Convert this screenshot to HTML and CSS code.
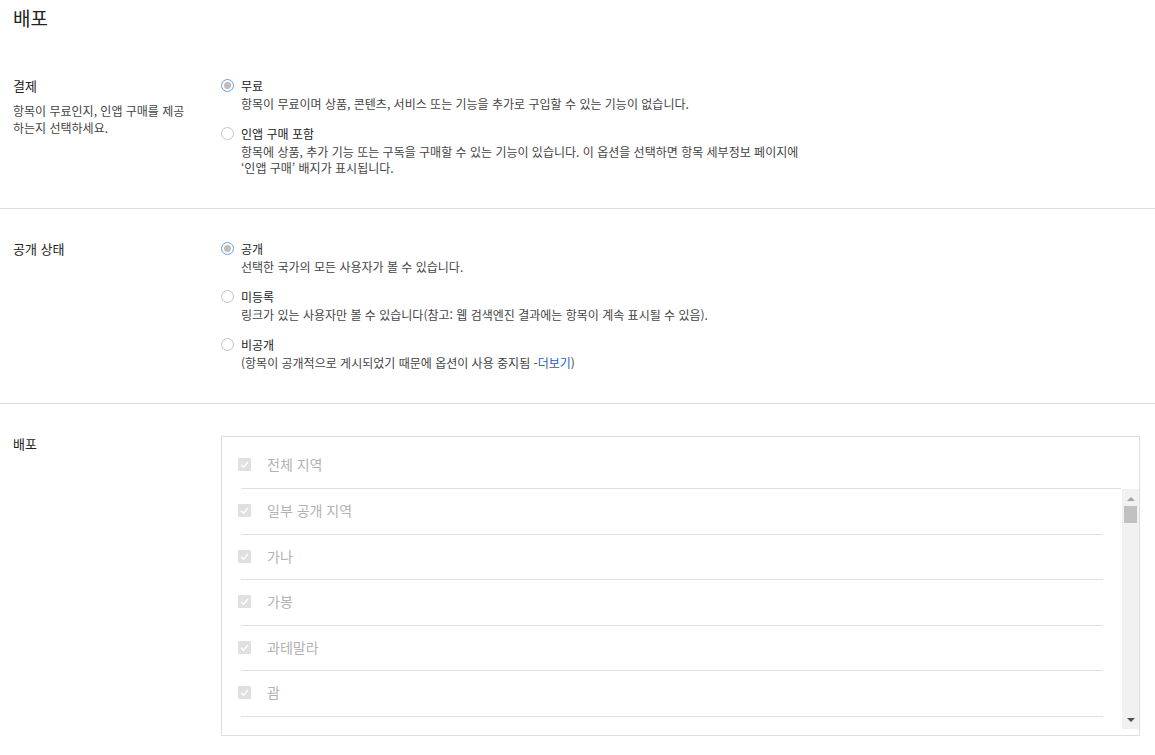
FILE: index.html
```html
<!DOCTYPE html>
<html lang="ko">
<head>
  <meta charset="UTF-8">
  <title>배포</title>
  <link rel="stylesheet" href="styles.css">
</head>
<body>
  <h1 class="page-title">배포</h1>

  <!-- 결제 -->
  <section class="field">
    <div class="field-label">
      <h2>결제</h2>
      <p>항목이 무료인지, 인앱 구매를 제공하는지 선택하세요.</p>
    </div>
    <div class="options">
      <div class="option">
        <span class="radio checked"></span>
        <div>
          <div class="option-title">무료</div>
          <p class="option-desc">항목이 무료이며 상품, 콘텐츠, 서비스 또는 기능을 추가로 구입할 수 있는 기능이 없습니다.</p>
        </div>
      </div>
      <div class="option">
        <span class="radio"></span>
        <div>
          <div class="option-title">인앱 구매 포함</div>
          <p class="option-desc">항목에 상품, 추가 기능 또는 구독을 구매할 수 있는 기능이 있습니다. 이 옵션을 선택하면 항목 세부정보 페이지에<br>‘인앱 구매’ 배지가 표시됩니다.</p>
        </div>
      </div>
    </div>
  </section>

  <!-- 공개 상태 -->
  <section class="field">
    <div class="field-label">
      <h2>공개 상태</h2>
    </div>
    <div class="options">
      <div class="option">
        <span class="radio checked"></span>
        <div>
          <div class="option-title">공개</div>
          <p class="option-desc">선택한 국가의 모든 사용자가 볼 수 있습니다.</p>
        </div>
      </div>
      <div class="option">
        <span class="radio"></span>
        <div>
          <div class="option-title">미등록</div>
          <p class="option-desc">링크가 있는 사용자만 볼 수 있습니다(참고: 웹 검색엔진 결과에는 항목이 계속 표시될 수 있음).</p>
        </div>
      </div>
      <div class="option">
        <span class="radio"></span>
        <div>
          <div class="option-title">비공개</div>
          <p class="option-desc">(항목이 공개적으로 게시되었기 때문에 옵션이 사용 중지됨 -<a href="#">더보기</a>)</p>
        </div>
      </div>
    </div>
  </section>

  <!-- 배포 지역 -->
  <section class="field">
    <div class="field-label">
      <h2>배포</h2>
    </div>
    <div class="region-box">
      <div class="region region-all">
        <span class="checkbox"><svg viewBox="0 0 13 13"><polyline points="3,6.8 5.5,9.2 10,4"/></svg></span>
        전체 지역
      </div>
      <div class="region-scroll">
        <ul class="region-list">
          <li class="region"><span class="checkbox"><svg viewBox="0 0 13 13"><polyline points="3,6.8 5.5,9.2 10,4"/></svg></span>일부 공개 지역</li>
          <li class="region"><span class="checkbox"><svg viewBox="0 0 13 13"><polyline points="3,6.8 5.5,9.2 10,4"/></svg></span>가나</li>
          <li class="region"><span class="checkbox"><svg viewBox="0 0 13 13"><polyline points="3,6.8 5.5,9.2 10,4"/></svg></span>가봉</li>
          <li class="region"><span class="checkbox"><svg viewBox="0 0 13 13"><polyline points="3,6.8 5.5,9.2 10,4"/></svg></span>과테말라</li>
          <li class="region"><span class="checkbox"><svg viewBox="0 0 13 13"><polyline points="3,6.8 5.5,9.2 10,4"/></svg></span>괌</li>
        </ul>
        <div class="scrollbar">
          <span class="arrow up"></span>
          <span class="thumb"></span>
          <span class="track"></span>
          <span class="arrow down"></span>
        </div>
      </div>
    </div>
  </section>
</body>
</html>
```

FILE: styles.css
```css
/* Base */
body {
  margin: 0;
  font-family: "Noto Sans CJK KR", "Noto Sans", sans-serif;
  color: #222;
  background: #fff;
}

p {
  margin: 0;
}

/* Page title */
.page-title {
  margin: 0;
  height: 45px;
  box-sizing: border-box;
  padding: 7px 13px 0;
  font-size: 19px;
  line-height: 22px;
  font-weight: normal;
  color: #222;
}

/* Field rows */
.field {
  display: grid;
  grid-template-columns: 208px 1fr;
  padding: 32px 15px 32px 13px;
  border-top: 1px solid #dcdcdc;
}

.page-title + .field {
  border-top: 0;
  padding-top: 33px;
}

.field-label h2 {
  margin: 0;
  font-size: 13px;
  line-height: 16px;
  font-weight: normal;
  color: #222;
}

.field-label p {
  margin-top: 8px;
  width: 180px;
  font-size: 12px;
  line-height: 17px;
  color: #444;
}

/* Radio options */
.options {
  display: flex;
  flex-direction: column;
  gap: 14px;
}

.option {
  display: flex;
  align-items: flex-start;
}

.radio {
  flex: 0 0 auto;
  width: 11px;
  height: 11px;
  margin: 1px 7px 0 0;
  border: 1px solid #c4c4c4;
  border-radius: 50%;
  background: #fff;
  display: flex;
  align-items: center;
  justify-content: center;
}

.radio.checked {
  border-color: #6b9cf6;
}

.radio.checked::after {
  content: "";
  width: 7px;
  height: 7px;
  border-radius: 50%;
  background: #bdbdbd;
}

.option-title {
  font-size: 12px;
  line-height: 16px;
  color: #222;
}

.option-desc {
  margin-top: 2px;
  font-size: 12px;
  line-height: 16px;
  color: #444;
}

.option-desc a {
  color: #1a5fd8;
  text-decoration: none;
}

/* Region list box */
.region-box {
  border: 1px solid #dedede;
  padding: 6px 0;
}

.region {
  display: flex;
  align-items: center;
  padding: 13px 0 15.6px;
  font-size: 14px;
  line-height: 17px;
  color: #b2b2b2;
  background: linear-gradient(#e0e0e0, #e0e0e0) 3px 100% / calc(100% - 3px) 1px no-repeat;
}

.region-all {
  margin: 0 18px 0 16px;
  padding-bottom: 16px;
}

.checkbox {
  flex: 0 0 auto;
  width: 13px;
  height: 13px;
  margin-right: 16px;
  border-radius: 1px;
  background: #e0e0e0;
  display: flex;
}

.checkbox svg {
  width: 13px;
  height: 13px;
  fill: none;
  stroke: #fff;
  stroke-width: 1.4;
}

.region-scroll {
  display: flex;
  height: 240px;
  overflow: hidden;
}

.region-list {
  flex: 1;
  margin: 0;
  padding: 0 19px 0 16px;
  list-style: none;
}

/* Fake scrollbar */
.scrollbar {
  flex: 0 0 17px;
  display: flex;
  flex-direction: column;
  align-items: center;
  background: #f1f1f1;
}

.arrow {
  height: 17px;
  width: 17px;
  display: flex;
  align-items: center;
  justify-content: center;
}

.arrow::after {
  content: "";
  border-left: 4px solid transparent;
  border-right: 4px solid transparent;
}

.arrow.up::after {
  border-bottom: 4px solid #a3a3a3;
  margin-top: 2px;
}

.arrow.down::after {
  border-top: 4px solid #505050;
  margin-bottom: 2px;
}

.thumb {
  width: 13px;
  height: 17px;
  background: #c1c1c1;
}

.track {
  flex: 1;
}
```
